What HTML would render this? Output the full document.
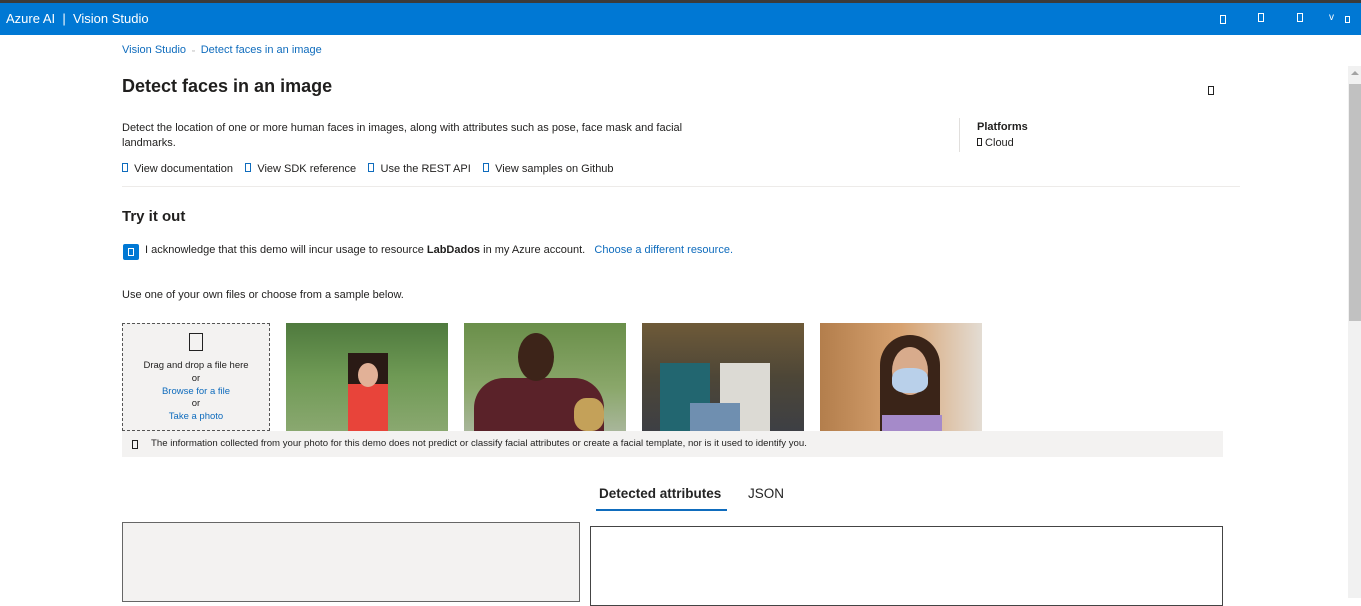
<!DOCTYPE html>
<html><head><meta charset="utf-8"><style>
*{margin:0;padding:0;box-sizing:border-box}
body{width:1361px;height:598px;overflow:hidden;background:#fff;font-family:"Liberation Sans",sans-serif;color:#201f1e;position:relative;font-size:11px}
.a{position:absolute}
.box{display:inline-block;border:1.3px solid currentColor;width:6px;height:9px}
.link{color:#0f6cbd}
</style></head><body>
<div class="a" style="left:0;top:0;width:1361px;height:3px;background:#3b3b3b"></div>
<div class="a" style="left:0;top:3px;width:1361px;height:32px;background:#0078d4;color:#fff;font-size:13px;line-height:32px;padding-left:6px">Azure AI &nbsp;| &nbsp;Vision Studio</div>
<span class="a box" style="left:1220px;top:15px;color:#fff"></span>
<span class="a box" style="left:1258px;top:13px;color:#fff"></span>
<span class="a box" style="left:1297px;top:13px;color:#fff"></span>
<span class="a" style="left:1329px;top:12px;color:#fff;font-size:10px">v</span>
<span class="a box" style="left:1345px;top:16px;color:#fff;height:7px;width:5px"></span>
<div class="a link" style="left:122px;top:44px">Vision Studio &nbsp;<span style="font-size:7px;color:#888">▫</span>&nbsp; Detect faces in an image</div>
<div class="a" style="left:122px;top:76px;font-size:18px;font-weight:bold">Detect faces in an image</div>
<span class="a box" style="left:1208px;top:86px;color:#222"></span>
<div class="a" style="left:122px;top:121px;line-height:15px;width:600px">Detect the location of one or more human faces in images, along with attributes such as pose, face mask and facial landmarks.</div>
<div class="a" style="left:959px;top:118px;width:1px;height:34px;background:#e1dfdd"></div>
<div class="a" style="left:977px;top:121px;font-weight:bold">Platforms</div>
<div class="a" style="left:977px;top:137px"><span class="box" style="width:5px;height:8px"></span> Cloud</div>
<div class="a" style="left:122px;top:163px"><span class="box link"></span>&nbsp; View documentation &nbsp; &nbsp;<span class="box link"></span>&nbsp; View SDK reference &nbsp; &nbsp;<span class="box link"></span>&nbsp; Use the REST API &nbsp; &nbsp;<span class="box link"></span>&nbsp; View samples on Github</div>
<div class="a" style="left:122px;top:186px;width:1118px;height:1px;background:#edebe9"></div>
<div class="a" style="left:122px;top:208px;font-size:15px;font-weight:bold">Try it out</div>
<div class="a" style="left:123px;top:244px;width:16px;height:16px;background:#0078d4;border-radius:2px"></div>
<span class="a box" style="left:128px;top:248px;color:#fff;width:6px;height:8px"></span>
<div class="a" style="left:145px;top:244px">I acknowledge that this demo will incur usage to resource <b>LabDados</b> in my Azure account. &nbsp;&nbsp;<span class="link">Choose a different resource.</span></div>
<div class="a" style="left:122px;top:289px">Use one of your own files or choose from a sample below.</div>
<div class="a" style="left:122px;top:323px;width:148px;height:108px;border:1px dashed #555;background:#f3f2f1;text-align:center;font-size:9.5px;line-height:12.8px;padding-top:36px">Drag and drop a file here<br>or<br><span class="link">Browse for a file</span><br>or<br><span class="link">Take a photo</span></div>
<span class="a box" style="left:189px;top:333px;width:14px;height:18px;color:#222"></span>
<div class="a" style="left:286px;top:323px;width:162px;height:108px;background:linear-gradient(180deg,#4f7a3e 0%,#6f9a55 50%,#8aa870 100%)"><div class="a" style="left:62px;top:30px;width:40px;height:78px;background:linear-gradient(#2a1a15 0 40%,#e8443a 40%)"></div><div class="a" style="left:72px;top:40px;width:20px;height:24px;border-radius:50%;background:#e2b197"></div></div>
<div class="a" style="left:464px;top:323px;width:162px;height:108px;background:linear-gradient(180deg,#6a8f4a,#8aa76a 60%,#a8b69a)"><div class="a" style="left:10px;top:55px;width:130px;height:53px;background:#5a2229;border-radius:30px 30px 0 0"></div><div class="a" style="left:54px;top:10px;width:36px;height:48px;border-radius:50%;background:#3d2419"></div><div class="a" style="left:110px;top:75px;width:30px;height:33px;background:#c4a159;border-radius:40%"></div></div>
<div class="a" style="left:642px;top:323px;width:162px;height:108px;background:linear-gradient(180deg,#6e5a38,#4d4637 50%,#3d3f44)"><div class="a" style="left:18px;top:40px;width:50px;height:68px;background:#226670"></div><div class="a" style="left:78px;top:40px;width:50px;height:68px;background:#dcdad4"></div><div class="a" style="left:48px;top:80px;width:50px;height:28px;background:#6f8fb0"></div></div>
<div class="a" style="left:820px;top:323px;width:162px;height:108px;background:linear-gradient(90deg,#b37e4c,#d7a270 50%,#e3dcd3)"><div class="a" style="left:60px;top:12px;width:60px;height:96px;border-radius:30px 30px 0 0;background:#3a2418"></div><div class="a" style="left:72px;top:24px;width:36px;height:48px;border-radius:50%;background:#d8ab8c"></div><div class="a" style="left:72px;top:45px;width:36px;height:25px;border-radius:40%;background:#b9d0ea"></div><div class="a" style="left:62px;top:92px;width:60px;height:16px;background:#a58ac9"></div></div>
<div class="a" style="left:122px;top:431px;width:1101px;height:26px;background:#f3f2f1;font-size:9.6px;line-height:26px;padding-left:29px">The information collected from your photo for this demo does not predict or classify facial attributes or create a facial template, nor is it used to identify you.</div>
<span class="a box" style="left:132px;top:440px;width:6px;height:9px"></span>
<div class="a" style="left:599px;top:486px;font-size:13.5px;font-weight:bold;color:#242424">Detected attributes</div>
<div class="a" style="left:596px;top:509px;width:131px;height:2px;background:#0f6cbd"></div>
<div class="a" style="left:748px;top:486px;font-size:13.5px;color:#242424">JSON</div>
<div class="a" style="left:122px;top:522px;width:458px;height:80px;background:#f3f2f1;border:1px solid #666"></div>
<div class="a" style="left:590px;top:526px;width:633px;height:80px;border:1px solid #444"></div>
<div class="a" style="left:1348px;top:66px;width:13px;height:532px;background:#f1f1f1"></div>
<div class="a" style="left:1349px;top:84px;width:12px;height:237px;background:#c1c1c1"></div>
<div class="a" style="left:1351px;top:71px;width:0;height:0;border-left:4px solid transparent;border-right:4px solid transparent;border-bottom:4px solid #a3a3a3"></div>
</body></html>
